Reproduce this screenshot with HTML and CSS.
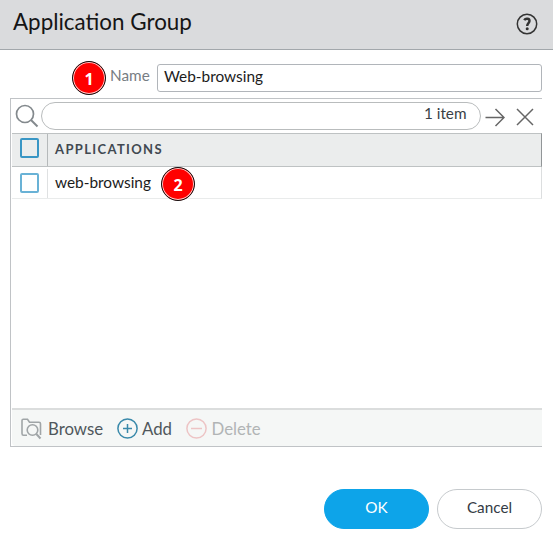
FILE: index.html
```html
<!DOCTYPE html>
<html lang="en">
<head>
<meta charset="utf-8">
<title>Application Group</title>
<link rel="stylesheet" href="styles.css">
</head>
<body>
<div class="dialog">
  <header class="titlebar">
    <h1>Application Group</h1>
    <svg class="help" width="22" height="22" viewBox="0 0 22 22"><circle cx="11" cy="11" r="9.7" fill="none" stroke="#333" stroke-width="1.500"/><path d="M8.200 7.200C9.500 5 13.700 5.200 13.500 8C13.400 10.200 11.200 10.100 11.200 13" fill="none" stroke="#333" stroke-width="2.400"/><circle cx="11.200" cy="15.700" r="1.500" fill="#333"/></svg>
  </header>
  <div class="field">
    <span class="badge">1</span>
    <label class="name-label">Name</label>
    <div class="name-input">Web-browsing</div>
  </div>
  <section class="panel">
    <div class="search">
      <svg class="magnifier" width="24" height="24" viewBox="0 0 24 24" fill="none" stroke="#83898d"><circle cx="10" cy="10" r="8.500" stroke-width="1.700"/><path d="M16 16L22.500 22.500" stroke-width="2"/></svg>
      <div class="search-box"><span>1 item</span></div>
      <svg class="arrow" width="20" height="20" viewBox="0 0 20 20" fill="none" stroke="#666" stroke-width="1.500"><path d="M0.500 10.500H19M10.500 2L19 10.500L10.500 19"/></svg>
      <svg class="close" width="18" height="18" viewBox="0 0 18 18" fill="none" stroke="#666" stroke-width="1.500"><path d="M1 1L17 17M17 1L1 17"/></svg>
    </div>
    <div class="row head">
      <div class="check-cell"><span class="check"></span></div>
      <div class="cell">APPLICATIONS</div>
    </div>
    <div class="row item">
      <div class="check-cell"><span class="check light"></span></div>
      <div class="cell"><span class="app-name">web-browsing</span><span class="badge">2</span></div>
    </div>
    <div class="blank"></div>
    <div class="toolbar">
      <svg class="browse-icon" width="21" height="22" viewBox="0 0 21 22" fill="none" stroke="#a0a5a7" stroke-width="1.600"><path d="M6 17.200H2.500Q1 17.200 1 15.500V2.500Q1 1.200 2.300 1.200H6.500L8.500 4.200H18Q19.500 4.200 19.500 5.700V17"/><circle cx="11.500" cy="12" r="5.300"/><path d="M15.300 16L19.500 20.500" stroke-width="2"/></svg>
      <span class="label browse">Browse</span>
      <svg class="add-icon" width="21" height="21" viewBox="0 0 21 21" fill="none" stroke="#3989aa" stroke-width="1.500"><circle cx="10.500" cy="10.500" r="9.600"/><path d="M10.500 6V15M6 10.500H15"/></svg>
      <span class="label add">Add</span>
      <svg class="delete-icon" width="21" height="21" viewBox="0 0 21 21" fill="none" stroke="#edc4c5" stroke-width="1.500"><circle cx="10.500" cy="10.500" r="9.600"/><path d="M5 10.500H16"/></svg>
      <span class="label delete">Delete</span>
    </div>
  </section>
  <footer class="actions">
    <div class="btn primary">OK</div>
    <div class="btn">Cancel</div>
  </footer>
</div>
</body>
</html>
```
FILE: styles.css
```css
* { box-sizing: border-box; }
body { margin: 0; background: #fff; font-family: Lato, sans-serif; color: #1c1c1c; }
.dialog { width: 553px; height: 544px; overflow: hidden; }
.titlebar { display: flex; justify-content: space-between; height: 50px; padding: 0 15px 0 13px; background: #dadbdd; border-bottom: 1px solid #a2a7ab; }
h1 { margin: 8px 0 0; font-size: 22.4px; line-height: 28px; font-weight: 400; color: #151515; white-space: nowrap; }
.help { margin-top: 13px; }
.field { display: flex; height: 48px; padding: 11px 11px 0 72px; }
.badge { flex: none; display: flex; align-items: center; justify-content: center; width: 34px; height: 34px; border-radius: 50%; border: 1.5px solid #111; padding-top: 2px; background: #f00; box-shadow: inset 0 0 0 1px #ffc8c8; color: #fff; font: 700 16px/20px "Open Sans", sans-serif; }
.name-label { width: 47px; margin: 4px 0 0 4px; font-size: 15.3px; line-height: 20px; color: #777d83; }
.name-input { flex: 1; height: 28px; margin-top: 3px; border: 1px solid #b1b5ba; border-radius: 3px; padding: 1px 6px; font-size: 15.4px; line-height: 20px; }
.panel { display: flex; flex-direction: column; width: 532px; height: 349px; margin-left: 10px; padding-left: 1px; border: 1px solid #c0c3c6; border-right: 0; }
.search { display: flex; height: 34px; padding-left: 3px; }
.magnifier { margin: 5px 2px 0 0; }
.search-box { width: 440px; height: 28px; margin-top: 3px; border: 1px solid #b9bcbd; border-radius: 14px; padding: 0 13.5px; text-align: right; font-size: 15.3px; line-height: 20px; color: #3a3f46; }
.arrow { margin: 8px 0 0 4px; }
.close { margin: 9px 0 0 11px; }
.row { display: flex; }
.head { height: 34px; background: #ebeded; border: 1px solid #bec2c3; border-left: 0; border-right-color: #929698; }
.item { height: 32px; border-bottom: 1px solid #e9ebeb; border-right: 1px solid #dcdedf; }
.check-cell { width: 36px; border-right: 1px solid #b5b9ba; }
.item .check-cell { border-right-color: #dfe1e2; margin-top: 2px; }
.check { display: block; width: 19px; height: 20px; margin: 4px 0 0 8px; border: 2px solid #3996c5; border-radius: 2px; }
.item .check { margin-top: 4px; }
.check.light { border-color: #69b2d6; }
.cell { display: flex; padding-left: 7px; }
.head .cell { padding-top: 5px; font-size: 13px; line-height: 20px; font-weight: 700; letter-spacing: 1.35px; color: #414951; }
.app-name { width: 106px; padding-top: 5px; font-size: 15.4px; line-height: 20px; }
.blank { flex: 1; }
.toolbar { display: flex; height: 38px; border-top: 2px solid #dbdddd; background: #f5f7f6; border-bottom-left-radius: 4px; }
.browse-icon { margin: 8px 0 0 9px; }
.label { font-size: 16.8px; line-height: 22px; color: #50575c; padding-top: 8px; }
.browse { width: 69px; margin-left: 6px; }
.add-icon, .delete-icon { margin-top: 8px; }
.add { width: 44px; margin-left: 4px; }
.delete { margin-left: 4.5px; color: #b1b4b5; }
.actions { display: flex; justify-content: flex-end; gap: 8px; padding: 42px 11px 0 0; }
.btn { width: 105px; height: 40px; border: 1px solid #c6cacd; border-radius: 20px; text-align: center; font-size: 15.3px; line-height: 35px; color: #343b45; }
.primary { background: #0da4e9; border-color: #0da4e9; color: #fff; }
```
